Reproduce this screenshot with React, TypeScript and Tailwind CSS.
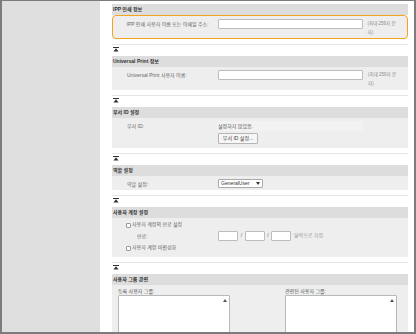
import { FC, ReactNode } from "react";

const font = "font-['Liberation_Sans','Noto_Sans_CJK_KR',sans-serif]";

const TopIcon: FC = () => (
  <svg width="6" height="5" viewBox="0 0 6 5" className="block">
    <rect x="0" y="0" width="6" height="1" fill="#333" />
    <path d="M3 1.3 L5.6 4.6 L0.4 4.6 Z" fill="#333" />
  </svg>
);

const Gap: FC = () => (
  <div className="h-[17px] pt-[5px]">
    <div className="h-px bg-[#e6e6e6]" />
    <div className="mt-[2px] ml-px">
      <TopIcon />
    </div>
  </div>
);

const Header: FC<{ title: string }> = ({ title }) => (
  <div className="h-[11px] bg-[#dddddd] pl-px text-[5px] font-bold leading-[11px] text-[#333]">
    {title}
  </div>
);

const TextInput: FC<{ w: string }> = ({ w }) => (
  <div className={`${w} h-[10px] shrink-0 border border-[#bcbcbc] bg-white rounded-[1px]`} />
);

const Note: FC = () => (
  <div className="ml-[5px] w-[31px] text-[4.5px] leading-[9px] text-[#8a8a8a]">
    (최대 256자 문자)
  </div>
);

const Row: FC<{ label: string; children: ReactNode; className?: string }> = ({
  label,
  children,
  className,
}) => (
  <div className={`flex items-start pl-[15px] ${className ?? ""}`}>
    <div className="w-[91px] shrink-0 text-[5px] leading-[10px] text-[#666]">{label}</div>
    {children}
  </div>
);

const Check: FC<{ label: string }> = ({ label }) => (
  <div className="flex items-center pl-[14px] h-[8px]">
    <div className="h-[5px] w-[5px] border border-[#999] bg-white rounded-[1px]" />
    <span className="ml-[1px] text-[5px] text-[#666]">{label}</span>
  </div>
);

const ListBox: FC = () => (
  <div className="relative h-[50px] w-[112px] border border-[#b8b8b8] bg-white rounded-[1px]">
    <svg width="4" height="3" viewBox="0 0 4 3" className="absolute right-[2px] top-[3px]">
      <path d="M2 0 L4 3 L0 3 Z" fill="#555" />
    </svg>
  </div>
);

export default function App() {
  return (
    <div
      className={`flex h-[334px] w-[416px] overflow-hidden border-x-2 border-b-2 border-t border-[#7c7c7c] bg-white ${font}`}
    >
      <div className="w-[98px] shrink-0 bg-[#dfdfdf]" />
      <div className="flex-1 overflow-hidden pl-[12px] pr-[6px] pt-[3px]">
        <Header title="IPP 인쇄 정보" />
        <div className="h-[24px] rounded-[4px] border-[1.5px] border-[#f3a41c] bg-[#eeeeee] pt-[3px]">
          <Row label="IPP 인쇄 사용자 이름 또는 이메일 주소:" className="-ml-[1.5px]">
            <TextInput w="w-[145px]" />
            <Note />
          </Row>
        </div>
        <Gap />

        <Header title="Universal Print 정보" />
        <div className="h-[23px] bg-[#eeeeee] pt-[3px]">
          <Row label="Universal Print 사용자 이름:">
            <TextInput w="w-[145px]" />
            <Note />
          </Row>
        </div>
        <Gap />

        <Header title="부서 ID 설정" />
        <div className="h-[30px] bg-[#eeeeee] pt-[3px]">
          <Row label="부서 ID:">
            <div className="w-[145px] bg-[#f2f2f2] text-[5px] leading-[10px] text-[#555]">설정하지 않았음.</div>
          </Row>
          <div className="ml-[106px] mt-[2px] flex h-[11px] w-[40px] items-center justify-center rounded-[1px] border border-[#b5b5b5] bg-[#f6f6f6] text-[5px] text-[#444]">
            부서 ID 설정...
          </div>
        </div>
        <Gap />

        <Header title="역할 설정" />
        <div className="h-[14px] bg-[#eeeeee] pt-[3px]">
          <Row label="역할 설정:" className="items-center">
            <div className="flex h-[9px] w-[45px] items-center justify-between rounded-[1px] border border-[#a9a9a9] bg-white pl-[2px] pr-[2px] text-[5px] text-[#333]">
              <span>GeneralUser</span>
              <svg width="4" height="3" viewBox="0 0 4 3">
                <path d="M0 0 L4 0 L2 3 Z" fill="#333" />
              </svg>
            </div>
          </Row>
        </div>
        <Gap />

        <Header title="사용자 계정 설정" />
        <div className="h-[39px] bg-[#eeeeee] pt-[3px]">
          <Check label="사용자 계정의 만료 설정" />
          <div className="mt-[2px] flex items-center pl-[25px]">
            <div className="w-[81px] text-[5px] leading-[10px] text-[#666]">만료:</div>
            <TextInput w="w-[20px]" />
            <span className="w-[7px] text-center text-[5px] text-[#555]">/</span>
            <TextInput w="w-[20px]" />
            <span className="w-[6px] text-center text-[5px] text-[#555]">/</span>
            <TextInput w="w-[20px]" />
            <span className="ml-[3px] text-[5px] text-[#9a9a9a]">달력으로 지정</span>
          </div>
          <div className="mt-[3px]">
            <Check label="사용자 계정 비활성화" />
          </div>
        </div>
        <Gap />

        <Header title="사용자 그룹 관련" />
        <div className="h-[60px] bg-[#eeeeee] pt-[2px]">
          <div className="flex pl-[6px]">
            <div>
              <div className="text-[5px] leading-[8px] text-[#555]">등록 사용자 그룹:</div>
              <ListBox />
            </div>
            <div className="ml-[55px]">
              <div className="text-[5px] leading-[8px] text-[#555]">관련된 사용자 그룹:</div>
              <ListBox />
            </div>
          </div>
        </div>
      </div>
    </div>
  );
}
